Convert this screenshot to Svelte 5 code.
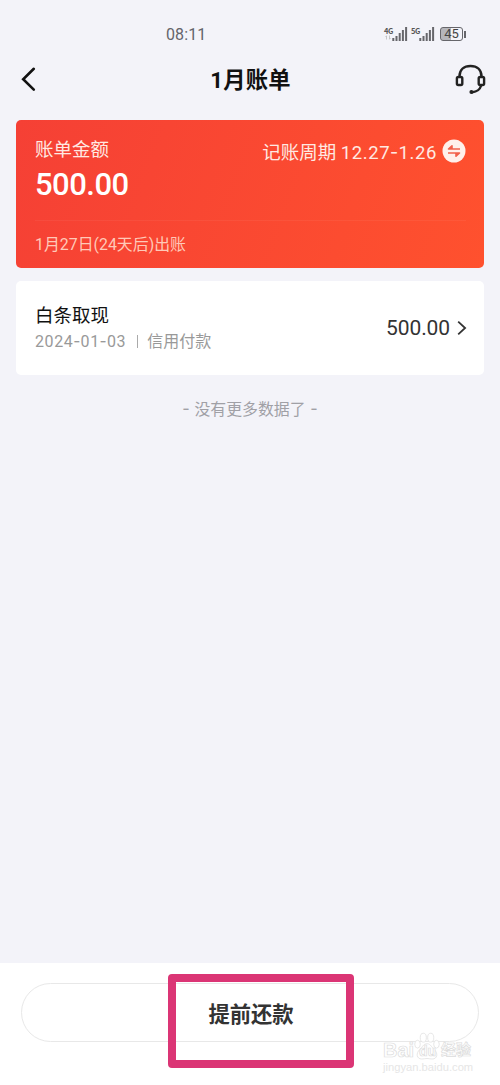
<script lang="ts">
  type Bill = {
    name: string;
    date: string[];
    kind: string;
    amount: string;
  };

  const networks = ['4G', '5G'];
  const bars = [3, 5, 8, 11, 14];

  const bills: Bill[] = [
    { name: '白条取现', date: ['2024', '01', '03'], kind: '信用付款', amount: '500.00' }
  ];
</script>

<div class="screen">
  <div class="status-bar">
    <span class="time">08:11</span>
    <div class="indicators">
      {#each networks as network}
        <div class="network">
          <span class="network-name">{network}</span>
          {#if network === '4G'}
            <svg class="traffic" width="6" height="5" viewBox="0 0 6 5">
              <path d="M1.5 4.5V.8M.5 2l1-1.2M4.5.5v3.7M5.5 3l-1 1.2" />
            </svg>
          {/if}
          <svg class="signal" width="16" height="14" viewBox="0 0 16 14">
            {#each bars as height, i}
              <rect x={i * 3.2 + 0.3} y={14 - height} width="2" {height} />
            {/each}
          </svg>
        </div>
      {/each}
      <div class="battery"><span>45</span></div>
    </div>
  </div>

  <header class="nav">
    <button type="button" class="icon-btn" aria-label="返回">
      <svg width="16" height="26" viewBox="0 0 16 26">
        <path d="M13.8 2.8 3.2 13.2l10.6 10.4" fill="none" stroke="#111" stroke-width="2.6" stroke-linecap="round" />
      </svg>
    </button>
    <h1>1月账单</h1>
    <button type="button" class="icon-btn" aria-label="客服">
      <svg width="32" height="32" viewBox="0 0 32 32" fill="none" stroke="#222" stroke-width="2.4">
        <path d="M5.5 13.4C5.5 6.8 10 3 16.5 3s11 3.8 11 10.4" />
        <rect x="2.9" y="14" width="5.4" height="8" rx="1.4" />
        <rect x="24.7" y="14" width="5.4" height="8" rx="1.4" />
        <path d="M27.2 22.5c-1.2 3.8-4.3 6.3-9 6.7" stroke-linecap="round" />
        <circle cx="17.4" cy="29" r="1.3" fill="#222" stroke-width="1.4" />
      </svg>
    </button>
  </header>

  <main>
    <section class="summary">
      <div class="summary-top">
        <div>
          <p class="label">账单金额</p>
          <p class="total">500.00</p>
        </div>
        <div class="period">
          <span>记账周期 <span class="range">12.27<span class="dash">-</span>1.26</span></span>
          <svg width="24" height="24" viewBox="0 0 24 24">
            <circle cx="12" cy="12" r="11.5" fill="#fff0eb" />
            <path d="M18 10H6.5L10 6.8V10M6 14h11.5L14 17.2V14" fill="#f2604b" stroke="#f2604b" stroke-width="1.6" stroke-linejoin="round" />
          </svg>
        </div>
      </div>
      <p class="due">1月27日(24天后)出账</p>
    </section>

    {#each bills as bill}
      <section class="bill">
        <div>
          <p class="bill-name">{bill.name}</p>
          <p class="bill-meta">
            <span class="date">
              {#each bill.date as part, i}{#if i > 0}<span class="dash">-</span>{/if}{part}{/each}
            </span>
            <i class="divider"></i>{bill.kind}
          </p>
        </div>
        <div class="bill-amount">
          <span>{bill.amount}</span>
          <svg width="10" height="16" viewBox="0 0 10 16">
            <path d="m1.2 1.6 6.9 6.4-6.9 6.4" fill="none" stroke="#333" stroke-width="1.8" />
          </svg>
        </div>
      </section>
    {/each}

    <p class="end"><span class="dash">-</span>没有更多数据了<span class="dash">-</span></p>
  </main>

  <footer>
    <button type="button" class="repay">提前还款</button>
    <div class="highlight"></div>
    <div class="watermark">
      <div class="brand">
        <span class="bai">Bai</span>
        <span class="paw">
          <svg width="26" height="29" viewBox="0 0 28 31">
            <ellipse cx="3.8" cy="13" rx="3" ry="4.2" />
            <ellipse cx="10" cy="6" rx="3.3" ry="4.8" />
            <ellipse cx="18" cy="6" rx="3.3" ry="4.8" />
            <ellipse cx="24.2" cy="13" rx="3" ry="4.2" />
            <path d="M14 12.5c4 0 5 4 8 6.5 4 3.5 3.5 10-2.5 10-2 0-3.5-.6-5.5-.6s-3.5.6-5.5.6c-6 0-6.5-6.5-2.5-10 3-2.5 4-6.5 8-6.5z" />
          </svg>
          <span class="du">du</span>
        </span>
        <span class="jy">经验</span>
      </div>
      <div class="site">jingyan.baidu.com</div>
    </div>
  </footer>
</div>

<style>
  :global(body) {
    background: #f3f3f9;
  }

  .screen {
    width: 500px;
    height: 1085px;
    display: flex;
    flex-direction: column;
    overflow: hidden;
    background: #f3f3f9;
    font-family: Roboto, 'Noto Sans CJK SC', sans-serif;
    color: #222;
  }

  p,
  h1 {
    margin: 0;
  }

  button {
    font-family: inherit;
    padding: 0;
    border: 0;
    background: none;
    cursor: pointer;
  }

  svg {
    display: block;
    flex: none;
  }

  /* Roboto's hyphen is too short next to the digits */
  .dash {
    font-family: 'Noto Sans CJK SC', sans-serif;
    line-height: 1;
  }

  .status-bar {
    height: 54px;
    padding: 14px 33px 0 166px;
    box-sizing: border-box;
    display: flex;
    align-items: center;
    justify-content: space-between;
  }

  .time {
    font-size: 16px;
    letter-spacing: 0.1px;
    color: #64646a;
  }

  .indicators {
    display: flex;
    align-items: center;
  }

  .network {
    display: grid;
    grid-template-columns: 8px 16px;
    grid-template-rows: 8px 6px;
    margin-right: 3px;
  }

  .network-name {
    font-family: 'Noto Sans CJK SC', sans-serif;
    font-size: 7.5px;
    line-height: 7px;
    font-weight: 700;
    letter-spacing: -0.4px;
    color: #555;
  }

  .traffic {
    grid-row: 2;
    grid-column: 1;
    margin-left: 1px;
    fill: none;
    stroke: #bbb;
    stroke-width: 0.8;
  }

  .signal {
    grid-row: 1 / 3;
    grid-column: 2;
    fill: #66666b;
  }

  .battery {
    position: relative;
    width: 23px;
    height: 14px;
    box-sizing: border-box;
    margin: 0 4px 0 2px;
    border: 1px solid #66666b;
    border-radius: 3px;
    background: linear-gradient(90deg, #b5b5ba 46%, transparent 46%);
    font-size: 13px;
    line-height: 12px;
    text-align: center;
    color: #444;
  }

  .battery::after {
    content: '';
    position: absolute;
    top: 3px;
    right: -4px;
    width: 2px;
    height: 7px;
    background: #66666b;
  }

  .nav {
    height: 66px;
    padding: 0 14px 16px 20px;
    box-sizing: border-box;
    display: grid;
    grid-template-columns: 36px 1fr 32px;
    align-items: center;
  }

  h1 {
    padding: 1px 9px 0 0;
    font-size: 22.3px;
    line-height: 30px;
    font-weight: 700;
    letter-spacing: 0.2px;
    text-align: center;
    color: #111;
  }

  main {
    flex: 1;
    padding: 0 16px;
  }

  .summary {
    height: 148px;
    padding: 17px 18px 0 19px;
    box-sizing: border-box;
    border-radius: 5px;
    background: linear-gradient(110deg, #f54035, #ff512e);
    color: #ffe9e2;
  }

  .summary-top {
    height: 83px;
    display: flex;
    justify-content: space-between;
    border-bottom: 1px solid rgba(255, 255, 255, 0.05);
  }

  .label {
    padding-top: 1px;
    font-size: 18.5px;
    line-height: 24px;
  }

  .total {
    margin-top: 5px;
    font-size: 31px;
    line-height: 36px;
    font-weight: 500;
    letter-spacing: -0.5px;
    color: #fff;
  }

  .period {
    height: 26px;
    margin-top: 1px;
    display: flex;
    align-items: center;
    gap: 5px;
    font-size: 18.5px;
  }

  .period > span {
    line-height: 24px;
  }

  .range {
    letter-spacing: 0.6px;
  }

  .range .dash {
    font-size: 22px;
  }

  .due {
    margin-top: 11px;
    font-size: 15.9px;
    line-height: 25px;
    color: #ffc9b8;
  }

  .bill {
    height: 94px;
    margin-top: 13px;
    padding: 22px 17px 0 19px;
    box-sizing: border-box;
    display: flex;
    justify-content: space-between;
    border-radius: 5px;
    background: #fff;
  }

  .bill-name {
    font-size: 18.5px;
    line-height: 26px;
    color: #111;
  }

  .bill-meta {
    display: flex;
    align-items: center;
    font-size: 16px;
    line-height: 26px;
    color: #999;
  }

  .date {
    letter-spacing: 0.6px;
  }

  .date .dash {
    font-size: 19px;
  }

  .divider {
    width: 1px;
    height: 13px;
    margin: 0 9px 1px 11px;
    background: #aaa;
  }

  .bill-amount {
    height: 50px;
    display: flex;
    align-items: center;
    gap: 7px;
    font-size: 21px;
    letter-spacing: -0.1px;
    color: #333;
  }

  .end {
    margin-top: 22px;
    display: flex;
    justify-content: center;
    align-items: center;
    gap: 5px;
    font-size: 15.9px;
    line-height: 25px;
    color: #a0a0a6;
  }

  .end .dash {
    padding-bottom: 5px;
    font-size: 20px;
  }

  footer {
    position: relative;
    height: 122px;
    padding: 20px 21px 0;
    box-sizing: border-box;
    background: #fff;
  }

  .repay {
    width: 458px;
    height: 59px;
    display: block;
    border: 1px solid #e8e8e8;
    border-radius: 30px;
    font-size: 21.3px;
    font-weight: 700;
    line-height: 30px;
    padding-top: 4px;
    padding-left: 2px;
    color: #333;
  }

  .highlight {
    position: absolute;
    top: 11px;
    left: 168px;
    width: 186px;
    height: 94px;
    box-sizing: border-box;
    border: 8px solid #db3575;
    border-radius: 4px;
  }

  .watermark {
    position: absolute;
    top: 67px;
    left: 383px;
    color: #fff;
  }

  .brand {
    height: 31px;
    display: flex;
    align-items: flex-end;
    -webkit-text-stroke: 0.7px #dcdcdc;
  }

  .bai {
    width: 31px;
    font: 700 20px/21px 'Liberation Sans', sans-serif;
  }

  .paw {
    position: relative;
    width: 27px;
  }

  .paw svg {
    fill: #fff;
    stroke: #dedede;
    stroke-width: 0.8;
  }

  .du {
    position: absolute;
    left: 5px;
    bottom: 2px;
    font: 700 14px/15px 'Liberation Sans', sans-serif;
  }

  .jy {
    font-size: 15px;
    line-height: 21px;
    font-weight: 700;
  }

  .site {
    font: 11.2px/13px 'Liberation Sans', sans-serif;
    color: #e6e6e6;
  }
</style>
